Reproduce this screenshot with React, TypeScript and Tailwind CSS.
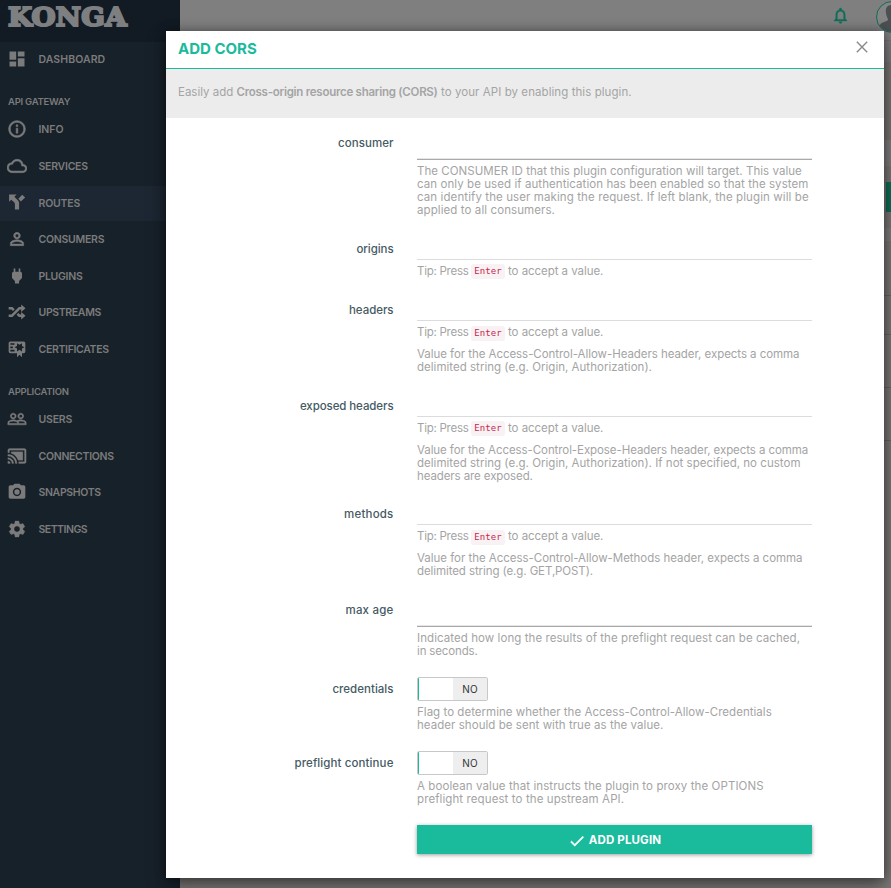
import type { ReactNode } from 'react';
import {
  MdCastConnected,
  MdCheck,
  MdCloudQueue,
  MdInfoOutline,
  MdNotificationsNone,
  MdPeopleOutline,
  MdPersonOutline,
  MdPhotoCamera,
  MdPower,
  MdSettings,
} from 'react-icons/md';

function Glyph({ d }: { d: string }) {
  return (
    <svg viewBox="0 0 24 24" width="1em" height="1em" fill="currentColor">
      <path d={d} />
    </svg>
  );
}

const dashboard = 'M13,3V9H21V3M13,21H21V11H13M3,21H11V15H3M3,13H11V3H3V13Z';
const fork =
  'M2.5,3H11.5L8.8,5.7L13,9.9C14,11 14.5,12 14.5,13.5V21H9.5V14L8.6,12.4L5,9.2L2.5,11.7V3M18.3,3.2L21.8,6.7L16.6,11.4L13.6,8Z';
const shuffle =
  'M17,3L22.25,7.5L17,12L22.25,16.5L17,21V18H14.26L11.44,15.18L13.56,13.06L15.5,15H17V12L17,9H15.5L6.5,18H2V15H5.26L14.26,6H17V3M2,6H6.5L9.32,8.82L7.2,10.94L5.26,9H2V6Z';
const certificate =
  'M4,3C2.89,3 2,3.89 2,5V15A2,2 0 0,0 4,17H12V22L15,19L18,22V17H20A2,2 0 0,0 22,15V8L22,6V5A2,2 0 0,0 20,3H16V3H4M12,5L15,7L18,5V8.5L21,10L18,11.5V15L15,13L12,15V11.5L9,10L12,8.5V5M4,5H9V7H4V5M4,9H7V11H4V9M4,13H9V15H4V13Z';

function NavItem({ icon, label, track, active }: { icon: ReactNode; label: string; track: string; active?: boolean }) {
  return (
    <div className={`flex h-[35px] items-center pl-[7px] ${active ? 'bg-[#1c2733]' : ''}`}>
      <span className="flex w-[31.5px] pb-[2px] text-[20px]">{icon}</span>
      <span className={`text-[10.5px] font-semibold whitespace-nowrap ${track}`}>{label}</span>
    </div>
  );
}

function Sidebar() {
  return (
    <aside className="h-full w-[180px] shrink-0 bg-[#17212a] text-[#7b7b7b]">
      <div className="mb-[0.6px] flex h-[42px] items-start bg-[#121a23] pl-2">
        <span className="origin-left scale-x-[1.04] [font-family:'DejaVu_Serif',serif] text-[26.5px] leading-[34px] font-bold tracking-[0.3px] text-[#7e7f81] [-webkit-text-stroke:2.2px_#7e7f81]">
          KONGA
        </span>
      </div>
      <div className="flex flex-col gap-[1.6px]">
        <NavItem icon={<Glyph d={dashboard} />} label="DASHBOARD" track="tracking-[0.08px]" />
        <div className="h-[32px] pt-[13px] pl-2 text-[9.5px] leading-[20px] font-semibold tracking-[-0.25px]">API GATEWAY</div>
        <NavItem icon={<MdInfoOutline className="stroke-[0.7]" />} label="INFO" track="tracking-[-0.05px]" />
        <NavItem icon={<MdCloudQueue className="stroke-[0.6]" />} label="SERVICES" track="tracking-[-0.25px]" />
        <NavItem icon={<Glyph d={fork} />} label="ROUTES" track="tracking-[-0.2px]" active />
        <NavItem icon={<MdPersonOutline className="stroke-[0.6]" />} label="CONSUMERS" track="tracking-[-0.26px]" />
        <NavItem icon={<MdPower />} label="PLUGINS" track="tracking-[-0.3px]" />
        <NavItem icon={<Glyph d={shuffle} />} label="UPSTREAMS" track="tracking-[-0.35px]" />
        <NavItem icon={<Glyph d={certificate} />} label="CERTIFICATES" track="tracking-[-0.33px]" />
        <div className="h-[32px] pt-[13px] pl-2 text-[9.5px] leading-[20px] font-semibold tracking-[-0.25px]">APPLICATION</div>
        <NavItem icon={<MdPeopleOutline className="stroke-[0.6]" />} label="USERS" track="tracking-[-0.2px]" />
        <NavItem icon={<MdCastConnected className="stroke-[0.3]" />} label="CONNECTIONS" track="tracking-[-0.3px]" />
        <NavItem icon={<MdPhotoCamera />} label="SNAPSHOTS" track="tracking-[-0.35px]" />
        <NavItem icon={<MdSettings className="stroke-[0.4]" />} label="SETTINGS" track="tracking-[-0.5px]" />
      </div>
    </aside>
  );
}

function Page() {
  return (
    <main className="flex min-w-0 flex-1 flex-col bg-[#7b7977]">
      <header className="flex h-[41px] shrink-0 items-start border-b border-[#727272] bg-[#7f7f7f]">
        <MdNotificationsNone className="mt-[6px] ml-[651px] shrink-0 stroke-[0.4] text-[19px] text-[#0e6e58]" />
        <div className="mt-px ml-[26px] flex size-8 shrink-0 items-end justify-center overflow-hidden rounded-full border border-[#0e6e58] bg-[#858585]">
          <svg viewBox="0 0 32 32" className="size-8 shrink-0 fill-[#4b5052]">
            <path d="M16 5c5 0 7 3 6 8-.4 3-2 5-2 7 2 2 7 2 9 6v6H3v-6c2-4 7-4 9-6 0-2-2-4-2-7-1-5 1-8 6-8z" />
          </svg>
        </div>
      </header>
      <div className="h-[21px] bg-[#7b7b7b]" />
      <div className="h-[78px] bg-[#777573]" />
      <div className="h-[26px] bg-[#7f7f7f]" />
      <div className="h-[62px] bg-[#7b7977] pt-4">
        <div className="ml-[706px] h-[30px] bg-[#0d6f58]" />
      </div>
      <div className="h-[13px] bg-[#7f7f7f]" />
      <div className="h-[55px] border-b border-[#686664]" />
      <div className="h-[39px] border-b border-[#686664]" />
      <div className="h-[53px] border-b border-[#686664]" />
      <div className="h-[53px] border-b border-[#686664]" />
    </main>
  );
}

function Line({ track, children }: { track: string; children: ReactNode }) {
  return <div className={`whitespace-nowrap ${track}`}>{children}</div>;
}

function Tip({ low }: { low?: boolean }) {
  return (
    <div className="mb-[9px] flex h-[13px] items-center whitespace-nowrap">
      <span className="w-[54px] tracking-[-0.26px]">Tip: Press</span>
      <code
        className={`relative mr-[3px] flex h-[15px] w-[34px] items-center justify-center rounded-[3px] bg-[#f9f2f4] [font-family:'DejaVu_Sans_Mono',monospace] text-[9px] tracking-[0.12px] text-[#c7254e] ${low ? 'top-[1px]' : 'top-[0.4px]'}`}
      >
        Enter
      </code>
      <span className="tracking-[-0.05px]">to accept a value.</span>
    </div>
  );
}

function Row({ label, height, labelTrack, children }: { label: string; height: string; labelTrack: string; children: ReactNode }) {
  return (
    <div className={`flex ${height}`}>
      <div className={`w-[227.5px] shrink-0 text-right text-[11.5px] leading-[25px] font-medium text-[#455a64] ${labelTrack}`}>{label}</div>
      <div className="ml-[23.5px] w-[395px] text-[11.5px] leading-[13px] text-[#a4a4a4]">{children}</div>
    </div>
  );
}

const TextInput = () => <div className="mb-[5px] h-[29px] border-b border-[#a9a9a9] shadow-[inset_0_-1px_0_#e6e6e6]" />;
const TagInput = () => <div className="mb-[5px] h-[23px] border-b border-[#dcdcdc]" />;

function Toggle() {
  return (
    <div className="mb-[5px] flex h-6 w-[71px] overflow-hidden rounded-[2px] border border-[#c8c8c8]">
      <div className="w-px bg-[#1abb9c]" />
      <div className="w-[34px] bg-white" />
      <div className="flex flex-1 items-center justify-center bg-[#eeeeee] text-[10px] tracking-[0.1px] text-[#333333]">NO</div>
    </div>
  );
}

function Modal() {
  return (
    <section className="absolute top-[31px] left-[166px] flex h-[847px] w-[718px] flex-col bg-white shadow-[0_8px_18px_rgba(0,0,0,0.4),0_0_10px_rgba(0,0,0,0.35)]">
      <div className="flex h-[38px] shrink-0 items-center justify-between border-b border-[#1abb9c] pr-4 pl-3">
        <h4 className="text-[15px] font-bold text-[#1abb9c]">ADD CORS</h4>
        <svg viewBox="0 0 12 12" className="mt-[-5px] size-3 stroke-[#8a8a8a] stroke-[1.4]">
          <path d="M.8.8l10.4 10.4M11.2.8.8 11.2" />
        </svg>
      </div>
      <div className="flex h-[49px] shrink-0 items-center bg-[#ececec] pb-[2px] pl-3 text-[11.5px] whitespace-pre text-[#a4a4a4]">
        <span>Easily add </span>
        <span className="font-semibold tracking-[-0.26px]">Cross-origin resource sharing (CORS)</span>
        <span className="tracking-[0.07px]"> to your API by enabling this plugin.</span>
      </div>
      <div className="flex flex-col pt-[13px]">
        <Row label="consumer" height="h-[106px]" labelTrack="tracking-[0.06px]">
          <TextInput />
          <Line track="tracking-[0.04px]">The CONSUMER ID that this plugin configuration will target. This value</Line>
          <Line track="tracking-[0.07px]">can only be used if authentication has been enabled so that the system</Line>
          <Line track="tracking-[0.1px]">can identify the user making the request. If left blank, the plugin will be</Line>
          <Line track="tracking-[0.09px]">applied to all consumers.</Line>
        </Row>
        <Row label="origins" height="h-[61px]" labelTrack="tracking-[-0.08px]">
          <TagInput />
          <Tip />
        </Row>
        <Row label="headers" height="h-[96px]" labelTrack="tracking-[-0.04px]">
          <TagInput />
          <Tip low />
          <Line track="tracking-[-0.05px]">Value for the Access-Control-Allow-Headers header, expects a comma</Line>
          <Line track="tracking-[0.02px]">delimited string (e.g. Origin, Authorization).</Line>
        </Row>
        <Row label="exposed headers" height="h-[108px]" labelTrack="tracking-[-0.09px]">
          <TagInput />
          <Tip />
          <Line track="tracking-[-0.08px]">Value for the Access-Control-Expose-Headers header, expects a comma</Line>
          <Line track="tracking-[0.02px]">delimited string (e.g. Origin, Authorization). If not specified, no custom</Line>
          <Line track="tracking-[-0.1px]">headers are exposed.</Line>
        </Row>
        <Row label="methods" height="h-[96px]" labelTrack="tracking-[0.2px]">
          <TagInput />
          <Tip low />
          <Line track="tracking-[-0.03px]">Value for the Access-Control-Allow-Methods header, expects a comma</Line>
          <Line track="tracking-[-0.09px]">delimited string (e.g. GET,POST).</Line>
        </Row>
        <Row label="max age" height="h-[79px]" labelTrack="tracking-[0.2px]">
          <TextInput />
          <Line track="tracking-[0.07px]">Indicated how long the results of the preflight request can be cached,</Line>
          <Line track="tracking-[-0.15px]">in seconds.</Line>
        </Row>
        <Row label="credentials" height="h-[74px]" labelTrack="tracking-[0.02px]">
          <Toggle />
          <Line track="tracking-[0.03px]">Flag to determine whether the Access-Control-Allow-Credentials</Line>
          <Line track="tracking-[0.05px]">header should be sent with true as the value.</Line>
        </Row>
        <Row label="preflight continue" height="h-[74px]" labelTrack="tracking-[0.1px]">
          <Toggle />
          <Line track="tracking-[0.09px]">A boolean value that instructs the plugin to proxy the OPTIONS</Line>
          <Line track="tracking-[0.1px]">preflight request to the upstream API.</Line>
        </Row>
        <button className="ml-[251px] flex h-[29px] w-[395px] items-center justify-center gap-[3px] bg-[#1abb9c] pt-[2px] text-[11.5px] font-bold tracking-[0.15px] text-white shadow-[0_1px_4px_rgba(0,0,0,0.4)]">
          <MdCheck className="stroke-[0.6] text-[18px]" />
          ADD PLUGIN
        </button>
      </div>
    </section>
  );
}

export default function App() {
  return (
    <div className="relative flex h-[888px] w-[891px] overflow-hidden [font-family:Inter,'Open_Sans',sans-serif] [&_path[fill=none]]:stroke-none">
      <Sidebar />
      <Page />
      <Modal />
    </div>
  );
}
